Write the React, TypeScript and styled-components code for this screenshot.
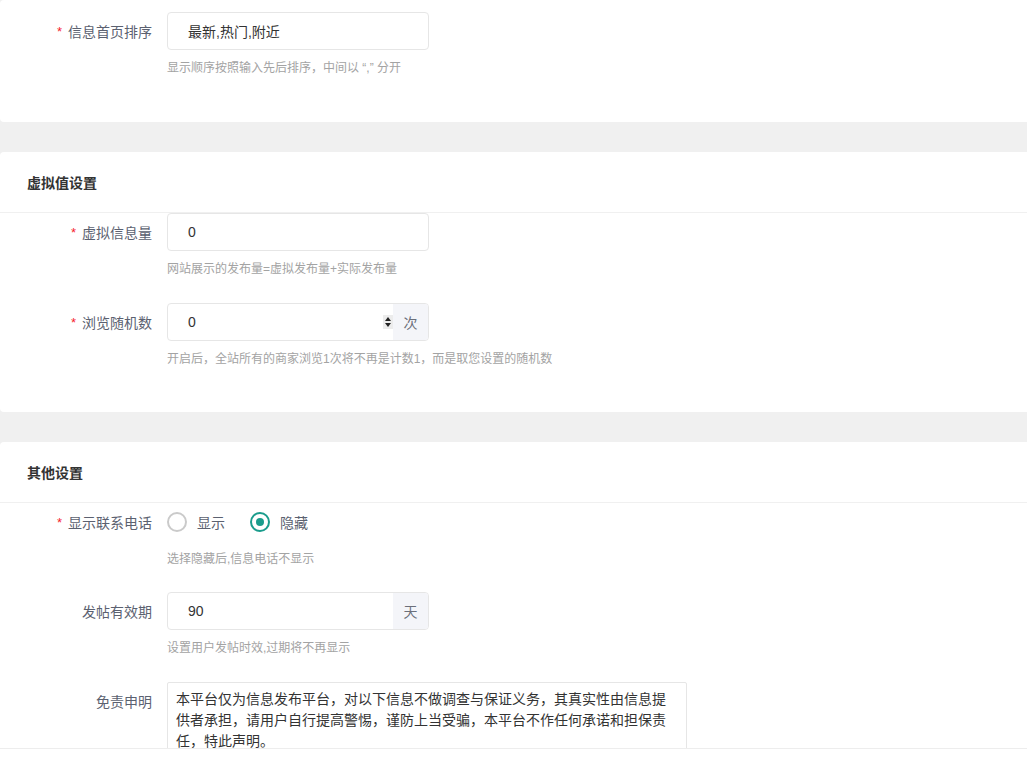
import React from 'react';
import styled, { createGlobalStyle } from 'styled-components';

const GlobalStyle = createGlobalStyle`
    html, body {
        margin: 0;
        padding: 0;
        background: #f0f0f0;
        font-family: "Liberation Sans", "Noto Sans CJK SC", sans-serif;
    }
    * {
        box-sizing: border-box;
    }
`;

const Page = styled.div`
    display: flex;
    flex-direction: column;
    gap: 30px;
    padding-bottom: 40px;
`;

const Card = styled.section<{ $top?: number; $bottom?: number }>`
    background: #fff;
    border-radius: 4px 0 0 4px;
    padding: ${p => p.$top ?? 0}px 0 ${p => p.$bottom ?? 19}px;
`;

const CardHeader = styled.div`
    height: 61px;
    padding: 0 27px;
    display: flex;
    align-items: center;
    font-size: 14px;
    font-weight: 700;
    color: #333;
    border-bottom: 1px solid #f0f0f0;
`;

const Item = styled.div<{ $mb?: number }>`
    display: flex;
    align-items: flex-start;
    margin-bottom: ${p => p.$mb ?? 24}px;
`;

const Label = styled.label`
    width: 152px;
    flex-shrink: 0;
    height: 38px;
    margin-right: 15px;
    display: flex;
    align-items: center;
    justify-content: flex-end;
    font-size: 14px;
    color: #5b6170;
    white-space: nowrap;
`;

const Star = styled.span`
    color: #f5222d;
    margin-right: 6px;
    font-size: 13px;
`;

const Control = styled.div`
    display: flex;
    flex-direction: column;
`;

const Help = styled.div`
    margin-top: 8px;
    line-height: 20px;
    font-size: 12px;
    color: #a3a3a3;
    white-space: nowrap;
`;

const Field = styled.div`
    width: 262px;
    height: 38px;
    display: flex;
    border: 1px solid #e6e6e6;
    border-radius: 4px;
    overflow: hidden;
    background: #fff;
`;

const TextInput = styled.input`
    flex: 1;
    min-width: 0;
    border: 0;
    outline: none;
    padding: 0 0 0 20px;
    font-family: inherit;
    font-size: 14px;
    color: #333;
    background: transparent;
`;

const Spinner = styled.span`
    align-self: center;
    width: 10px;
    height: 14px;
    background: #ececec;
    display: flex;
    align-items: center;
    justify-content: center;
`;

const Addon = styled.span`
    width: 35px;
    flex-shrink: 0;
    display: flex;
    align-items: center;
    justify-content: center;
    background: #f4f5f9;
    font-size: 14px;
    color: #6b6f7a;
`;

const RadioGroup = styled.div`
    height: 38px;
    display: flex;
    align-items: center;
    gap: 25px;
`;

const RadioOption = styled.label`
    display: flex;
    align-items: center;
    gap: 10px;
    font-size: 14px;
    color: #5b6170;
    cursor: pointer;
`;

const RadioDot = styled.span<{ $on?: boolean }>`
    width: 20px;
    height: 20px;
    border-radius: 50%;
    border: 2px solid ${p => (p.$on ? '#1a9c8c' : '#cacaca')};
    display: flex;
    align-items: center;
    justify-content: center;
    &::after {
        content: '';
        width: 8px;
        height: 8px;
        border-radius: 50%;
        background: ${p => (p.$on ? '#1a9c8c' : 'transparent')};
    }
`;

const TextArea = styled.textarea`
    width: 520px;
    height: 90px;
    border: 1px solid #e6e6e6;
    border-radius: 2px;
    padding: 6px 8px;
    font-family: inherit;
    font-size: 14px;
    line-height: 21px;
    color: #333;
    resize: none;
    outline: none;
`;

const Footer = styled.div`
    position: fixed;
    left: 0;
    right: 0;
    bottom: 0;
    height: 13px;
    background: #fff;
    border-top: 1px solid #ededed;
`;

const Arrows = () => (
    <svg width="8" height="12" viewBox="0 0 8 12">
        <path d="M4 1 L7 5 H1 Z" fill="#222" />
        <path d="M4 11 L7 7 H1 Z" fill="#222" />
    </svg>
);

const App: React.FC = () => {
    const [show, setShow] = React.useState(false);
    return (
        <>
            <GlobalStyle />
            <Page>
                <Card $top={12} $bottom={20}>
                    <Item>
                        <Label><Star>*</Star>信息首页排序</Label>
                        <Control>
                            <Field>
                                <TextInput defaultValue="最新,热门,附近" />
                            </Field>
                            <Help>显示顺序按照输入先后排序，中间以 “,” 分开</Help>
                        </Control>
                    </Item>
                </Card>

                <Card>
                    <CardHeader>虚拟值设置</CardHeader>
                    <Item>
                        <Label><Star>*</Star>虚拟信息量</Label>
                        <Control>
                            <Field>
                                <TextInput defaultValue="0" />
                            </Field>
                            <Help>网站展示的发布量=虚拟发布量+实际发布量</Help>
                        </Control>
                    </Item>
                    <Item>
                        <Label><Star>*</Star>浏览随机数</Label>
                        <Control>
                            <Field>
                                <TextInput defaultValue="0" />
                                <Spinner><Arrows /></Spinner>
                                <Addon>次</Addon>
                            </Field>
                            <Help>开启后，全站所有的商家浏览1次将不再是计数1，而是取您设置的随机数</Help>
                        </Control>
                    </Item>
                </Card>

                <Card>
                    <CardHeader>其他设置</CardHeader>
                    <Item $mb={23}>
                        <Label><Star>*</Star>显示联系电话</Label>
                        <Control>
                            <RadioGroup>
                                <RadioOption onClick={() => setShow(true)}>
                                    <RadioDot $on={show} />显示
                                </RadioOption>
                                <RadioOption onClick={() => setShow(false)}>
                                    <RadioDot $on={!show} />隐藏
                                </RadioOption>
                            </RadioGroup>
                            <Help>选择隐藏后,信息电话不显示</Help>
                        </Control>
                    </Item>
                    <Item>
                        <Label>发帖有效期</Label>
                        <Control>
                            <Field>
                                <TextInput defaultValue="90" />
                                <Addon>天</Addon>
                            </Field>
                            <Help>设置用户发帖时效,过期将不再显示</Help>
                        </Control>
                    </Item>
                    <Item>
                        <Label>免责申明</Label>
                        <TextArea defaultValue="本平台仅为信息发布平台，对以下信息不做调查与保证义务，其真实性由信息提供者承担，请用户自行提高警惕，谨防上当受骗，本平台不作任何承诺和担保责任，特此声明。" />
                    </Item>
                </Card>
            </Page>
            <Footer />
        </>
    );
};

export default App;
